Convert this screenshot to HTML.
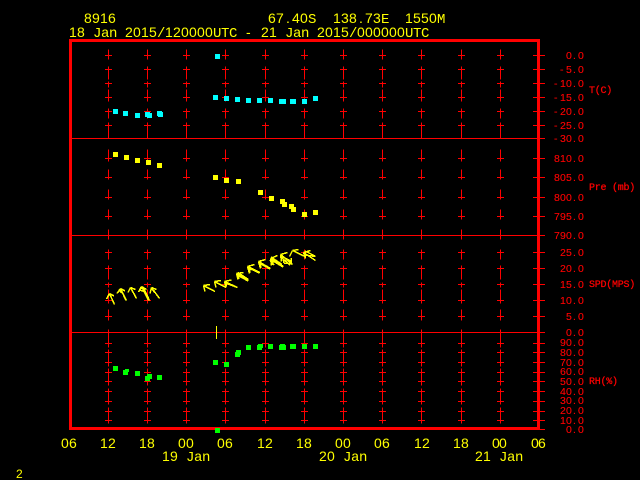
<!DOCTYPE html>
<html><head><meta charset="utf-8"><style>
html,body{margin:0;padding:0;background:#000;width:640px;height:480px;overflow:hidden}
svg{display:block}
text{font-family:"Liberation Sans",sans-serif;white-space:pre}
.y text,.y{fill:#ff0;font-size:14px}
.r text,.r{fill:#f00;font-size:10.5px;stroke:#f00;stroke-width:.12}
.m{font-family:"Liberation Mono",monospace}
.s text{font-family:"Liberation Mono",monospace;font-size:10px;letter-spacing:-.25px;stroke:#f00;stroke-width:.25}
</style></head><body>
<svg width="640" height="480" viewBox="0 0 640 480" xmlns="http://www.w3.org/2000/svg">
<rect width="640" height="480" fill="#000"/>
<defs>
<path id="c" fill="none" stroke="#f00" stroke-width="1" d="M0 49V59M0 66V79M0 81V87M0 89V101M0 108V118M0 122V138M0 149V161M0 169V179M0 189V199M0 209V219M0 229V239M0 249V259M0 265V279M0 282V287M0 289V303M0 309V320M0 329V347M0 349V366M0 368V385M0 388V404M0 407V423M-3.5 55h7M-3.5 69h7M-3.5 83h7M-3.5 97h7M-3.5 111h7M-3.5 125h7M-3.5 158h7M-3.5 177h7M-3.5 197h7M-3.5 216h7M-3.5 252h7M-3.5 268h7M-3.5 284h7M-3.5 300h7M-3.5 316h7M-3.5 343h7M-3.5 352h7M-3.5 362h7M-3.5 372h7M-3.5 381h7M-3.5 391h7M-3.5 401h7M-3.5 411h7M-3.5 420h7"/>
</defs>
<g shape-rendering="crispEdges">
<use href="#c" x="108.5" y=".5"/><use href="#c" x="147.5" y=".5"/><use href="#c" x="186.5" y=".5"/><use href="#c" x="225.5" y=".5"/><use href="#c" x="265.5" y=".5"/><use href="#c" x="304.5" y=".5"/><use href="#c" x="343.5" y=".5"/><use href="#c" x="382.5" y=".5"/><use href="#c" x="421.5" y=".5"/><use href="#c" x="461.5" y=".5"/><use href="#c" x="500.5" y=".5"/>
<path fill="none" stroke="#f00" stroke-width="1" d="M72 138.5H545M72 235.5H545M72 332.5H545M533 55.5h12M533 69.5h12M533 83.5h12M533 97.5h12M533 111.5h12M533 125.5h12M533 158.5h12M533 177.5h12M533 197.5h12M533 216.5h12M533 252.5h12M533 268.5h12M533 284.5h12M533 300.5h12M533 316.5h12M533 343.5h12M533 352.5h12M533 362.5h12M533 372.5h12M533 381.5h12M533 391.5h12M533 401.5h12M533 411.5h12M533 420.5h12M533 429.5h12"/>
<rect x="70.5" y="40.5" width="468" height="388" fill="none" stroke="#f00" stroke-width="3"/>
<g transform="translate(.5 .5)" stroke-width="1">
<path fill="#0ff" stroke="#0ff" d="M113 109h4v4h-4zM123 111h4v4h-4zM135 113h4v4h-4zM145 112h4v4h-4zM147 113h4v4h-4zM157 111h4v4h-4zM158 112h4v4h-4zM215 54h4v4h-4zM213 95h4v4h-4zM224 96h4v4h-4zM235 97h4v4h-4zM246 98h4v4h-4zM257 98h4v4h-4zM268 98h4v4h-4zM279 99h6v4h-6zM290 99h5v4h-5zM302 99h4v4h-4zM313 96h4v4h-4z"/>
<path fill="#ff0" stroke="#ff0" d="M113 152h4v4h-4zM124 155h4v4h-4zM135 158h4v4h-4zM146 160h4v4h-4zM157 163h4v4h-4zM213 175h4v4h-4zM224 178h4v4h-4zM236 179h4v4h-4zM258 190h4v4h-4zM269 196h4v4h-4zM280 199h4v4h-4zM282 202h4v4h-4zM289 204h4v4h-4zM291 207h4v4h-4zM302 212h4v4h-4zM313 210h4v4h-4z"/>
<path fill="#0f0" stroke="#0f0" d="M113 366h4v4h-4zM123 370h4v4h-4zM125 369h3v2h-3zM135 371h4v4h-4zM145 376h4v4h-4zM147 374h4v4h-4zM157 375h4v4h-4zM213 360h4v4h-4zM224 362h4v4h-4zM235 352h4v4h-4zM236 350h4v4h-4zM246 345h4v4h-4zM257 345h4v4h-4zM258 344h4v3h-4zM268 344h4v4h-4zM279 345h6v4h-6zM280 344h4v2h-4zM290 344h5v4h-5zM302 344h4v4h-4zM313 344h4v4h-4zM215 428h4v4h-4z"/>
</g>
<path fill="#ff0" d="M216 326h1v13h-1z"/>
<g fill="none" stroke="#ff0" stroke-width="1.5">
<path d="M109.5 293.5L114.5 304.5M109.5 293.5l4.5 2.5M109.5 293.5l-3 5.5"/>
<path d="M120.5 288.5L126 300.5M120.5 288.5l4.5 2.5M120.500 288.5l-3.500 5M121 290L126.500 300.500M119 290l3 3"/>
<path d="M130.500 287.500L136.500 298.500M130.500 287.500l5 2M130.500 287.500l-2.500 5"/>
<path d="M141.500 286.500L148.500 300.500M143 287L149.500 300.500M141.500 286.500l5 3M141.500 286.500l-3 5.500M141 288l4 2M140 290l5 2"/>
<path d="M151.500 287.500L159.500 298.500M151.500 287.500l5 2M151.500 287.500l-1.500 6M152 289L155 293"/>
<path d="M203.500 285.500L215 291.500M203.500 285.500l6.500-1M203.500 285.500l1.500 6"/>
<path d="M214.500 281.500L226 287.500M214.500 281.500l6.500-1M214.500 281.500l1.500 6"/>
<path d="M224.500 281.500L237.500 287.500M224.500 282.500L236 287M224.500 281.500l7-1.500M224.500 281.500l1.500 6M225.500 281.500l1 5"/>
<path d="M236.500 273.500L248.500 280.500M236.500 274.500L248 281M238 272.500L248.500 279.500M236.500 273.500l7-1M236.500 273.500l1.500 6M238 274l1 5"/>
<path d="M247.500 266.500L260 272.500M247.500 267.500L259.500 273M247.500 266.500l7-2M247.500 266.500l2 7M249 266l1 7"/>
<path d="M258.500 261.500L270.500 268.500M258.500 262.500L270 269M258.500 261.500l7-2M258.500 261.500l2 7M260 261l1 7"/>
<path d="M270.500 258.500L283.500 266.500M270.500 259.500L283 267M271 257L282 264.500M270.500 258.500l7-3M270.500 258.500l1 7M272 258l1 7M270 260l4 5"/>
<path d="M280.500 254.500L292.500 264.500M281 256L292 261.500M281 257L290 265M280.500 254.500l7-2M280.500 254.500l1 7M282 255l2 8M284 263l8 1M291 258v5"/>
<path d="M292.500 250.500L305 256.500M292.500 250.500l6-1M292.500 250.500l-3 6"/>
<path d="M303.500 252.500L315.500 260.500M305 255L315.500 256.500M305 251L315 256M303.500 252.500l7-2M303.500 252.500l2 6M305 252v5"/>
</g>
</g>
<g class="y">
<text y="23"><tspan x="84 92 100 108">8916</tspan></text>
<text y="23"><tspan x="268 276 286 292 300">67.40</tspan><tspan class="m" x="308">S</tspan></text>
<text y="23"><tspan x="333 341 349 359 365 373">138.73</tspan><tspan class="m" x="381">E</tspan></text>
<text y="23"><tspan x="405 413 421 429">1550</tspan><tspan class="m" x="437">M</tspan></text>
<text y="37"><tspan x="69 77">18</tspan><tspan class="m" x="93 101 109">Jan</tspan><tspan x="125 133 141 149">2015</tspan><tspan class="m" x="157">/</tspan><tspan x="165 173 181 189 197 205">120000</tspan><tspan class="m" x="213 221 229">UTC</tspan><tspan x="246">-</tspan></text>
<text y="37"><tspan x="261 269">21</tspan><tspan class="m" x="285 293 301">Jan</tspan><tspan x="317 325 333 341">2015</tspan><tspan class="m" x="349">/</tspan><tspan x="357 365 373 381 389 397">000000</tspan><tspan class="m" x="405 413 421">UTC</tspan></text>
<text y="448" x="61 69">06</text><text y="448" x="100 108">12</text><text y="448" x="139 147">18</text><text y="448" x="178 186">00</text><text y="448" x="217 225">06</text><text y="448" x="257 265">12</text><text y="448" x="296 304">18</text><text y="448" x="335 343">00</text><text y="448" x="374 382">06</text><text y="448" x="414 422">12</text><text y="448" x="453 461">18</text><text y="448" x="492 499">00</text><text y="448" x="531 538">06</text>
<text y="461"><tspan x="162 170">19</tspan><tspan class="m" x="186 194 202">Jan</tspan></text>
<text y="461"><tspan x="319 327">20</tspan><tspan class="m" x="343 351 359">Jan</tspan></text>
<text y="461"><tspan x="475 483">21</tspan><tspan class="m" x="499 507 515">Jan</tspan></text>
<text y="478" x="16" style="font-size:12px">2</text>
</g>
<g class="r">
<text y="59" x="566 573 578">0.0</text>
<text y="73" x="560 566 573 578">-5.0</text>
<text y="87" x="554 560 566 573 578">-10.0</text>
<text y="101" x="554 560 566 573 578">-15.0</text>
<text y="115" x="554 560 566 573 578">-20.0</text>
<text y="129" x="554 560 566 573 578">-25.0</text>
<text y="142" x="554 560 566 573 578">-30.0</text>
<text y="162" x="554 560 566 573 578">810.0</text>
<text y="181" x="554 560 566 573 578">805.0</text>
<text y="201" x="554 560 566 573 578">800.0</text>
<text y="220" x="554 560 566 573 578">795.0</text>
<text y="239" x="554 560 566 573 578">790.0</text>
<text y="256" x="560 566 573 578">25.0</text>
<text y="272" x="560 566 573 578">20.0</text>
<text y="288" x="560 566 573 578">15.0</text>
<text y="304" x="560 566 573 578">10.0</text>
<text y="320" x="566 573 578">5.0</text>
<text y="336" x="566 573 578">0.0</text>
<text y="346" x="560 566 573 578">90.0</text>
<text y="356" x="560 566 573 578">80.0</text>
<text y="366" x="560 566 573 578">70.0</text>
<text y="375" x="560 566 573 578">60.0</text>
<text y="385" x="560 566 573 578">50.0</text>
<text y="395" x="560 566 573 578">40.0</text>
<text y="404" x="560 566 573 578">30.0</text>
<text y="414" x="560 566 573 578">20.0</text>
<text y="424" x="560 566 573 578">10.0</text>
<text y="433" x="566 573 578">0.0</text>
<g class="s">
<text x="589" y="93">T(C)</text>
<text x="589" y="190">Pre (mb)</text>
<text x="589" y="287">SPD(MPS)</text>
<text x="589" y="384">RH(%)</text>
</g>
</g>
</svg>
</body></html>
